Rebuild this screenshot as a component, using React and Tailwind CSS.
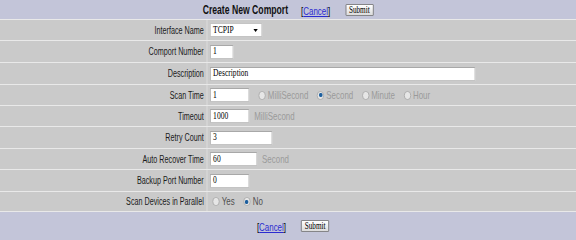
import React from "react";

const Radio = ({ checked }) => (
  <span className="inline-flex items-center justify-center w-[10px] h-[9px] rounded-full border border-[#a8a8a8] bg-[#e6e6e6] shrink-0">
    {checked && <span className="block w-[5px] h-[4px] rounded-full bg-[#1d5f9e]" />}
  </span>
);

const Input = ({ w, value }) => (
  <div
    className={`h-[14px] bg-white border border-[#c4c4c4] border-t-[#a8a8a8] border-l-[#a8a8a8] flex items-center pl-[3px] text-[10.5px] leading-none text-black ${w}`}
    style={{ fontFamily: '"Liberation Serif", serif' }}
  >
    {value}
  </div>
);

const Row = ({ label, h, children, last }) => (
  <div className={`flex border-t border-[#e9e9e9] ${last ? "border-b" : ""} ${h}`}>
    <div className="w-[287px] flex items-center justify-end pr-[4px] text-[10px] text-[#1a1a1a]">
      {label}
    </div>
    <div className="w-px bg-[#e4e4e4]" />
    <div className="flex-1 flex items-center pl-[4px]">{children}</div>
  </div>
);

const Opt = ({ checked, label, color = "text-[#9a9a9a]" }) => (
  <div className="flex items-center gap-[3px]">
    <Radio checked={checked} />
    <span className={`text-[11px] ${color}`}>{label}</span>
  </div>
);

const SubmitBtn = () => (
  <div
    className="w-[39px] h-[12px] border border-[#7a7a7a] bg-gradient-to-b from-white to-[#dcdcdc] flex items-center justify-center text-[10px] leading-none text-black rounded-[1px]"
    style={{ fontFamily: '"Liberation Serif", serif' }}
  >
    Submit
  </div>
);

const CancelLink = () => (
  <span className="text-[11px] text-black">
    [<span className="text-[#2b2bd0] underline">Cancel</span>]
  </span>
);

export default function App() {
  return (
    <div className="w-[576px] h-[240px] overflow-hidden bg-[#c3c5d9]">
      <div
        className="w-[800px] h-[240px] origin-left scale-x-[0.72] flex flex-col"
        style={{ fontFamily: '"Liberation Sans", Arial, sans-serif' }}
      >
        <div className="h-[19px] bg-[#c3c5d9] flex items-center justify-center">
          <span className="text-[12px] font-bold text-[#111] mr-[18px]">Create New Comport</span>
          <span className="mr-[21px]"><CancelLink /></span>
          <SubmitBtn />
        </div>
        <div className="bg-[#cacaca]">
          <Row label="Interface Name" h="h-[21px]">
            <div
              className="w-[72px] h-[14px] bg-white border border-[#c4c4c4] flex items-center justify-between pl-[3px] pr-[5px] text-[10.5px] leading-none"
              style={{ fontFamily: '"Liberation Serif", serif' }}
            >
              <span>TCPIP</span>
              <span className="w-0 h-0 border-l-[3px] border-r-[3px] border-t-[3px] border-l-transparent border-r-transparent border-t-black" />
            </div>
          </Row>
          <Row label="Comport Number" h="h-[22px]">
            <Input w="w-[32px]" value="1" />
          </Row>
          <Row label="Description" h="h-[22px]">
            <Input w="w-[368px]" value="Description" />
          </Row>
          <Row label="Scan Time" h="h-[21px]">
            <Input w="w-[54px]" value="1" />
            <div className="flex items-center gap-[12px] ml-[13px]">
              <Opt label="MilliSecond" />
              <Opt checked label="Second" />
              <Opt label="Minute" />
              <Opt label="Hour" />
            </div>
          </Row>
          <Row label="Timeout" h="h-[21px]">
            <Input w="w-[54px]" value="1000" />
            <span className="ml-[7px] text-[11px] text-[#9a9a9a]">MilliSecond</span>
          </Row>
          <Row label="Retry Count" h="h-[22px]">
            <Input w="w-[86px]" value="3" />
          </Row>
          <Row label="Auto Recover Time" h="h-[21px]">
            <Input w="w-[65px]" value="60" />
            <span className="ml-[7px] text-[11px] text-[#9a9a9a]">Second</span>
          </Row>
          <Row label="Backup Port Number" h="h-[22px]">
            <Input w="w-[54px]" value="0" />
          </Row>
          <Row label="Scan Devices in Parallel" h="h-[21px]" last>
            <div className="flex items-center gap-[12px] ml-[3px]">
              <Opt label="Yes" color="text-[#505050]" />
              <Opt checked label="No" color="text-[#505050]" />
            </div>
          </Row>
        </div>
        <div className="flex-1 bg-[#c3c5d9] flex items-center justify-center pl-[14px]">
          <span className="mr-[21px]"><CancelLink /></span>
          <SubmitBtn />
        </div>
      </div>
    </div>
  );
}
